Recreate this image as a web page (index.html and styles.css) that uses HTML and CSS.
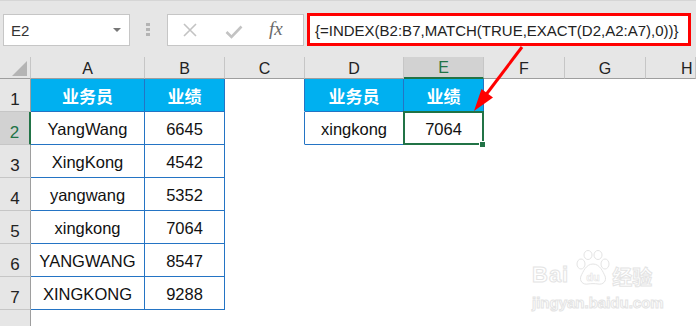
FILE: index.html
```html
<!DOCTYPE html>
<html lang="zh-CN">
<head>
    <meta charset="UTF-8">
    <title>INDEX MATCH EXACT</title>
    <link rel="stylesheet" href="styles.css">
</head>
<body>
    <div class="window">
        <!-- Formula bar -->
        <div class="toolbar">
            <div class="namebox">
                <span>E2</span>
                <span class="caret"></span>
            </div>
            <div class="grip"><i></i><i></i><i></i></div>
            <div class="fbuttons">
                <svg class="icon-x" width="16" height="16" viewBox="0 0 16 16">
                    <path d="M2 2 L14 14 M14 2 L2 14" stroke="#c3c3c3" stroke-width="1.6" fill="none"/>
                </svg>
                <svg class="icon-ok" width="18" height="14" viewBox="0 0 18 14">
                    <path d="M1.5 7 L6.5 12 L16.5 1.5" stroke="#c3c3c3" stroke-width="2.6" fill="none"/>
                </svg>
                <span class="fx">fx</span>
            </div>
            <div class="formula">{=INDEX(B2:B7,MATCH(TRUE,EXACT(D2,A2:A7),0))}</div>
        </div>

        <!-- Sheet grid -->
        <div class="sheet">
            <div class="c corner"><span class="tri"></span></div>
            <div class="c ch">A</div>
            <div class="c ch">B</div>
            <div class="c ch">C</div>
            <div class="c ch">D</div>
            <div class="c ch sel">E</div>
            <div class="c ch">F</div>
            <div class="c ch">G</div>
            <div class="c ch last">H</div>

            <div class="c rh">1</div>
            <div class="c d h">业务员</div>
            <div class="c d h">业绩</div>
            <div class="c e edge"></div>
            <div class="c d h">业务员</div>
            <div class="c d h">业绩</div>
            <div class="c e"></div>
            <div class="c e"></div>
            <div class="c e"></div>

            <div class="c rh sel">2</div>
            <div class="c d">YangWang</div>
            <div class="c d">6645</div>
            <div class="c e edge"></div>
            <div class="c d">xingkong</div>
            <div class="c d active">7064</div>
            <div class="c e"></div>
            <div class="c e"></div>
            <div class="c e"></div>

            <div class="c rh">3</div>
            <div class="c d">XingKong</div>
            <div class="c d">4542</div>
            <div class="c e"></div><div class="c e"></div><div class="c e"></div>
            <div class="c e"></div><div class="c e"></div><div class="c e"></div>

            <div class="c rh">4</div>
            <div class="c d">yangwang</div>
            <div class="c d">5352</div>
            <div class="c e"></div><div class="c e"></div><div class="c e"></div>
            <div class="c e"></div><div class="c e"></div><div class="c e"></div>

            <div class="c rh">5</div>
            <div class="c d">xingkong</div>
            <div class="c d">7064</div>
            <div class="c e"></div><div class="c e"></div><div class="c e"></div>
            <div class="c e"></div><div class="c e"></div><div class="c e"></div>

            <div class="c rh">6</div>
            <div class="c d">YANGWANG</div>
            <div class="c d">8547</div>
            <div class="c e"></div><div class="c e"></div><div class="c e"></div>
            <div class="c e"></div><div class="c e"></div><div class="c e"></div>

            <div class="c rh">7</div>
            <div class="c d">XINGKONG</div>
            <div class="c d">9288</div>
            <div class="c e"></div><div class="c e"></div><div class="c e"></div>
            <div class="c e"></div><div class="c e"></div><div class="c e"></div>

            <div class="c rh"></div>
            <div class="c e"></div><div class="c e"></div><div class="c e"></div>
            <div class="c e"></div><div class="c e"></div><div class="c e"></div>
            <div class="c e"></div><div class="c e"></div>
        </div>

        <!-- Red arrow pointing from the formula to E2 -->
        <svg class="arrow" width="696" height="326" viewBox="0 0 696 326">
            <line x1="522" y1="47" x2="485" y2="96" stroke="#ff0000" stroke-width="3"/>
            <polygon points="474,111 493,97.5 481.5,89" fill="#ff0000"/>
        </svg>

        <!-- Watermark -->
        <div class="watermark">
            <div class="wm-top">
                <span class="wm-bai">Bai</span>
                <svg class="wm-paw" width="38" height="36" viewBox="0 0 38 36">
                    <g fill="#fff" stroke="#e4e4e4" stroke-width="1">
                        <ellipse cx="7" cy="14" rx="4" ry="5"/>
                        <ellipse cx="14" cy="5" rx="4" ry="4.5"/>
                        <ellipse cx="24" cy="5" rx="4" ry="4.5"/>
                        <ellipse cx="31" cy="14" rx="4" ry="5"/>
                        <path d="M19 14 C12 14 9 22 7 26 C5 31 9 35 14 34 C17 33.5 21 33.5 24 34 C29 35 33 31 31 26 C29 22 26 14 19 14 Z"/>
                    </g>
                    <text x="19" y="31" text-anchor="middle" class="wm-du">du</text>
                </svg>
                <span class="wm-cn">经验</span>
            </div>
            <div class="wm-url">jingyan.baidu.com</div>
        </div>
    </div>
</body>
</html>
```

FILE: styles.css
```css
body {
    margin: 0;
    background-color: #fff;
    font-family: "Liberation Sans", Arial, sans-serif;
}
.window {
    position: relative;
    width: 696px;
    height: 326px;
    overflow: hidden;
}

/* formula bar */
.toolbar {
    height: 57px;
    box-sizing: border-box;
    background-color: #e6e6e6;
    border-top: 1px solid #d6d6d6;
    display: flex;
    align-items: flex-start;
    padding-top: 12px;
    padding-left: 3px;
}
.namebox {
    width: 127px;
    height: 32px;
    margin-top: 1px;
    box-sizing: border-box;
    background-color: #fff;
    border: 1px solid #c6c6c6;
    display: flex;
    align-items: center;
    justify-content: space-between;
    padding: 0 8px 0 7px;
    font-size: 15px;
    color: #333;
}
.caret {
    width: 0;
    height: 0;
    border-left: 4px solid transparent;
    border-right: 4px solid transparent;
    border-top: 4px solid #777;
}
.grip {
    display: flex;
    flex-direction: column;
    gap: 2px;
    margin: 10px 0 0 16px;
}
.grip i {
    display: block;
    width: 4px;
    height: 3px;
    background-color: #b4b4b4;
}
.fbuttons {
    width: 137px;
    height: 32px;
    margin: 1px 0 0 17px;
    box-sizing: border-box;
    background-color: #fff;
    border: 1px solid #c6c6c6;
    display: flex;
    align-items: center;
    padding-left: 14px;
}
.icon-ok {
    margin-left: 27px;
    margin-top: 3px;
}
.fx {
    margin-left: 26px;
    font-family: "Liberation Serif", "DejaVu Serif", serif;
    font-style: italic;
    font-size: 19px;
    color: #6a6a6a;
    margin-top: -2px;
}
.formula {
    width: 384px;
    height: 33px;
    margin-left: 3px;
    box-sizing: border-box;
    background-color: #fff;
    border: 3px solid #ff0000;
    font-size: 15px;
    color: #222;
    padding: 6px 0 0 5px;
    white-space: nowrap;
}

/* grid */
.sheet {
    display: grid;
    grid-template-columns: 31px 114px 80px 80px 99px 80px 81px 81px 1fr;
    grid-template-rows: 22px repeat(8, 33px);
}
.c {
    box-sizing: border-box;
    border-right: 1px solid transparent;
    border-bottom: 1px solid transparent;
    display: flex;
    align-items: center;
    justify-content: center;
    white-space: nowrap;
}
.corner {
    background-color: #e6e6e6;
    border-right-color: #c6c6c6;
    border-bottom-color: #9e9e9e;
    position: relative;
}
.tri {
    position: absolute;
    right: 3px;
    bottom: 2px;
    width: 0;
    height: 0;
    border-left: 15px solid transparent;
    border-bottom: 15px solid #b4b4b4;
}
.ch {
    background-color: #e6e6e6;
    border-right-color: #c6c6c6;
    border-bottom-color: #9e9e9e;
    font-size: 16px;
    color: #222;
    padding-top: 2px;
}
.ch.last {
    justify-content: flex-start;
    padding-left: 35px;
}
.ch.sel {
    background-color: #d2d2d2;
    color: #217346;
    border-bottom: 2px solid #217346;
}
.rh {
    background-color: #e6e6e6;
    border-right-color: #9e9e9e;
    border-bottom-color: #c6c6c6;
    align-items: flex-end;
    padding-bottom: 1px;
    font-size: 17px;
    color: #222;
}
.rh.sel {
    background-color: #d2d2d2;
    color: #217346;
    border-right: 2px solid #217346;
}
.d {
    border-right-color: #2474c4;
    border-bottom-color: #2474c4;
    font-size: 16.5px;
    color: #111;
    padding-top: 3px;
}
.h {
    background-color: #00b0f0;
    color: #fff;
    font-family: "Noto Sans CJK SC", sans-serif;
    font-weight: bold;
    font-size: 17px;
    padding-top: 0;
}
.edge {
    border-right-color: #2474c4;
}
.active {
    position: relative;
}
.active::after {
    content: "";
    position: absolute;
    top: -1px;
    left: -1px;
    right: -1px;
    bottom: -1px;
    border: 2px solid #217346;
}
.active::before {
    content: "";
    position: absolute;
    right: -3px;
    bottom: -4px;
    width: 5px;
    height: 5px;
    background-color: #217346;
    border: 1px solid #fff;
    z-index: 1;
}

/* overlays */
.arrow {
    position: absolute;
    left: 0;
    top: 0;
    pointer-events: none;
}
.watermark {
    position: absolute;
    left: 532px;
    top: 250px;
    color: #fff;
    -webkit-text-stroke: 1px #e4e4e4;
}
.wm-top {
    display: flex;
    align-items: flex-end;
}
.wm-bai {
    font-size: 22px;
    font-weight: bold;
    letter-spacing: 1px;
    line-height: 1;
}
.wm-paw {
    margin-left: 5px;
}
.wm-du {
    font-family: "Liberation Sans", sans-serif;
    font-size: 11px;
    font-weight: bold;
    fill: #fff;
    stroke: #e4e4e4;
    stroke-width: 0.6;
}
.wm-cn {
    font-family: "Noto Sans CJK SC", sans-serif;
    font-size: 20px;
    font-weight: bold;
    line-height: 1;
    margin-bottom: -1px;
}
.wm-url {
    font-size: 15px;
    font-weight: bold;
    margin-top: 8px;
}
```
